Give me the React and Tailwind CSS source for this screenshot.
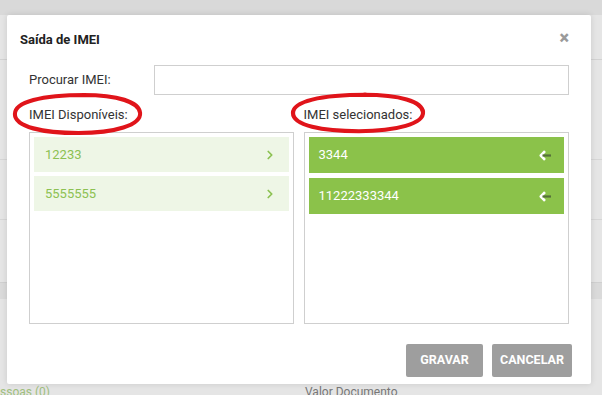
import { ChevronRight } from 'lucide-react';

const available = ['12233', '5555555'];
const selected = ['3344', '11222333344'];

const ArrowLeft = () => (
  <svg width="13" height="11" viewBox="0 0 13 11" aria-hidden="true">
    <path d="M6 1.2 1.8 5.5 6 9.8" fill="none" stroke="#ffffff" strokeWidth="2.6" strokeLinejoin="round" />
    <path d="M3.5 5.5H12" stroke="#55713a" strokeWidth="2.2" />
  </svg>
);

const Ring = ({ className }) => (
  <svg className={`pointer-events-none absolute ${className}`} viewBox="0 0 136 44" preserveAspectRatio="none" fill="none" aria-hidden="true">
    <path
      d="M74 3C110 3 132 10 133 21c1 12-26 20-64 20C32 41 3 35 3 22 3 10 30 3 76 3"
      stroke="#e0141a"
      strokeWidth="4.2"
      strokeLinecap="round"
    />
  </svg>
);

export default function App() {
  return (
    <div className="relative h-[395px] w-[602px] overflow-hidden bg-[#e5e5e5] font-['Roboto',sans-serif]">
      {/* page behind the dialog */}
      <div className="h-[15px] bg-[#d9d9d9]" />
      <div className="h-[45px] border-b border-[#d2d2d2]" />
      <div className="h-[100px] border-b border-[#d6d6d6]" />
      <div className="h-[60px] border-b border-[#d6d6d6]" />
      <div className="h-[63px] border-b border-[#d0d0d0]" />
      <div className="h-[16px] bg-[#dadada]" />
      <div className="flex h-[96px] items-end text-[12px] leading-[14px]">
        <span className="-mb-[4px] w-[305px] text-[#9fbf7e]">ssoas (0)</span>
        <span className="-mb-[4px] text-[#777]">Valor Documento</span>
      </div>

      {/* dialog */}
      <div className="absolute left-[7px] top-[15px] h-[369px] w-[584px] rounded-[2px] bg-white shadow-[0_0_6px_rgba(0,0,0,0.12)]">
        <div className="flex h-[48px] items-center justify-between pl-[13px] pr-[22px] pt-[2px]">
          <h2 className="text-[13px] font-bold text-[#222]">Saída de IMEI</h2>
          <span className="-mt-[4px] text-[18px] font-black leading-none text-[#9a9a9a]">×</span>
        </div>

        <div className="px-[22px] pt-[2px]">
          <div className="flex h-[30px] items-center">
            <label className="w-[125px] text-[13px] text-[#333]">Procurar IMEI:</label>
            <input className="h-[30px] flex-1 border border-[#cfcfcf] bg-white outline-none" />
          </div>

          <div className="mt-[10px] grid grid-cols-2 gap-[11px]">
            <div className="relative">
              <p className="h-[27px] text-[13px] text-[#333]">IMEI Disponíveis:</p>
              <Ring className="-left-[17px] -top-[13px] h-[44px] w-[131px]" />
              <div className="flex h-[192px] flex-col gap-[4px] border border-[#cfcfcf] p-[4px]">
                {available.map((item) => (
                  <div key={item} className="flex h-[35px] items-center justify-between bg-[#eef6e6] pl-[11px] pr-[12px] text-[13px] text-[#8cc152]">
                    <span>{item}</span>
                    <ChevronRight size={14} strokeWidth={3} className="text-[#8cc152]" />
                  </div>
                ))}
              </div>
            </div>

            <div className="relative -ml-[1px]">
              <p className="h-[27px] text-[13px] text-[#333]">IMEI selecionados:</p>
              <Ring className="-left-[14px] -top-[13px] h-[42px] w-[136px]" />
              <div className="flex h-[192px] flex-col gap-[5px] border border-[#cfcfcf] p-[4px]">
                {selected.map((item) => (
                  <div key={item} className="flex h-[36px] items-center justify-between bg-[#8bc24a] pl-[10px] pr-[12px] text-[13px] text-white">
                    <span>{item}</span>
                    <ArrowLeft />
                  </div>
                ))}
              </div>
            </div>
          </div>

          <div className="mt-[20px] flex justify-end gap-[9px]">
            <button type="button" className="h-[33px] w-[77px] rounded-[2px] bg-[#9e9e9e] text-[12.5px] font-bold text-white">
              GRAVAR
            </button>
            <button type="button" className="-mr-[3px] h-[33px] w-[80px] rounded-[2px] bg-[#9e9e9e] text-[12.5px] font-bold text-white">
              CANCELAR
            </button>
          </div>
        </div>
      </div>
    </div>
  );
}
